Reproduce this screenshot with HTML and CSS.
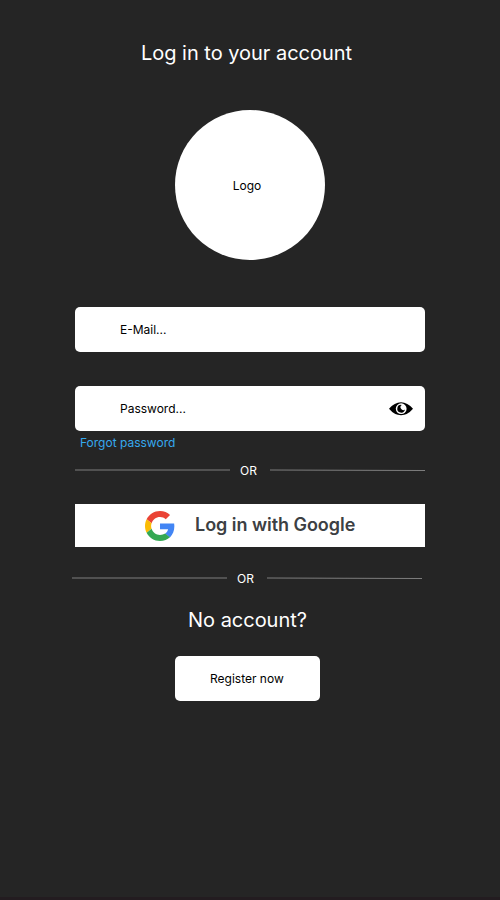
FILE: index.html
```html
<!DOCTYPE html>
<html lang="en">
<head>
<meta charset="utf-8">
<title>Log in</title>
<link rel="stylesheet" href="styles.css">
</head>
<body>
<main class="login">
  <h1 class="title">Log in to your account</h1>
  <div class="logo">Logo</div>
  <div class="field email">E-Mail...</div>
  <div class="field password">
    <span>Password...</span>
    <svg class="eye" width="24" height="14" viewBox="0 0 24 14">
      <path d="M0 6.800Q5.500 .3 12 .3T24 6.800Q18.500 13.300 12 13.300T0 6.800Z" fill="#000"/>
      <circle cx="12.200" cy="6.700" r="5.400" fill="#fff"/>
      <path d="M12.800 2.900A3.900 3.900 0 1 0 16 7.600A2.500 2.500 0 1 1 12.800 2.900Z" fill="#000"/>
    </svg>
  </div>
  <a class="forgot">Forgot password</a>
  <div class="divider">
    <svg width="155" height="4" viewBox="0 0 155 4"><path d="M0 2H155" class="rule"/></svg>
    <span class="or">OR</span>
    <svg width="155" height="4" viewBox="0 0 155 4"><path d="M0 2L155 2.500" class="rule"/></svg>
  </div>
  <div class="google">
    <svg class="g" width="30" height="30" viewBox="0 0 48 48">
      <path fill="#EA4335" d="M24 9.500c3.540 0 6.710 1.220 9.210 3.600l6.850-6.850C35.900 2.380 30.470 0 24 0 14.620 0 6.510 5.380 2.560 13.220l7.980 6.190C12.430 13.720 17.740 9.500 24 9.500z"/>
      <path fill="#4285F4" d="M46.980 24.550c0-1.570-.15-3.090-.38-4.550H24v9.020h12.940c-.58 2.960-2.260 5.480-4.780 7.180l7.730 6c4.510-4.180 7.090-10.360 7.090-17.650z"/>
      <path fill="#FBBC05" d="M10.530 28.590c-.48-1.450-.76-2.990-.76-4.590s.27-3.140.76-4.590l-7.980-6.190C.92 16.460 0 20.120 0 24c0 3.880.92 7.540 2.560 10.780l7.970-6.190z"/>
      <path fill="#34A853" d="M24 48c6.480 0 11.930-2.130 15.890-5.810l-7.730-6c-2.150 1.450-4.920 2.300-8.160 2.300-6.260 0-11.570-4.220-13.470-9.910l-7.980 6.190C6.510 42.620 14.620 48 24 48z"/>
    </svg>
    <span class="google-text">Log in with Google</span>
  </div>
  <div class="divider second">
    <svg width="155" height="4" viewBox="0 0 155 4"><path d="M0 2H155" class="rule"/></svg>
    <span class="or">OR</span>
    <svg width="155" height="4" viewBox="0 0 155 4"><path d="M0 2L155 2.500" class="rule"/></svg>
  </div>
  <h2 class="title question">No account?</h2>
  <div class="register">Register now</div>
</main>
</body>
</html>
```

FILE: styles.css
```css
* { box-sizing: border-box; }
body {
  margin: 0;
  background: #252525;
  color: #fff;
  font-family: Inter, "Liberation Sans", sans-serif;
  font-size: 12px;
  font-weight: 400;
  line-height: 15px;
}
.login {
  width: 500px;
  height: 900px;
  padding: 41px 75px 0;
  border-bottom: 3px solid #231c20;
  display: flex;
  flex-direction: column;
}
.title {
  margin: 0 0 0 66px;
  font-size: 20px;
  font-weight: 400;
  letter-spacing: -0.02px;
  line-height: 24px;
  white-space: nowrap;
}
.logo {
  width: 150px;
  height: 150px;
  margin: 45px 0 0 100px;
  padding: 1px 6px 0 0;
  border-radius: 50%;
  background: #fff;
  color: #000;
  display: flex;
  align-items: center;
  justify-content: center;
}
.field {
  height: 45px;
  padding: 0 12px 0 45px;
  border-radius: 5px;
  background: #fff;
  color: #000;
  display: flex;
  align-items: center;
  justify-content: space-between;
}
.email { margin-top: 47px; }
.password { margin-top: 34px; }
.forgot {
  margin: 4px 0 0 5px;
  color: #36a9ee;
}
.divider {
  height: 15px;
  margin-top: 13px;
  display: flex;
}
.divider svg { margin-top: 5px; }
.rule { stroke: #7e7e7e; stroke-width: 1; fill: none; }
.or { width: 40px; padding-left: 10px; }
.google {
  height: 43px;
  margin-top: 26px;
  padding-left: 70px;
  background: #fff;
  display: flex;
  align-items: center;
}
.g { margin-top: 1px; }
.google-text {
  margin: -2px 0 0 20px;
  color: #3c4043;
  font-size: 18px;
  font-weight: 600;
  letter-spacing: -0.04px;
  line-height: 22px;
  white-space: nowrap;
}
.second { margin: 24px 0 0 -3px; }
.question { margin: 22px 0 0 113px; }
.register {
  width: 145px;
  height: 45px;
  margin: 24px 0 0 100px;
  padding-left: 35px;
  border-radius: 5px;
  background: #fff;
  color: #000;
  display: flex;
  align-items: center;
}
```
